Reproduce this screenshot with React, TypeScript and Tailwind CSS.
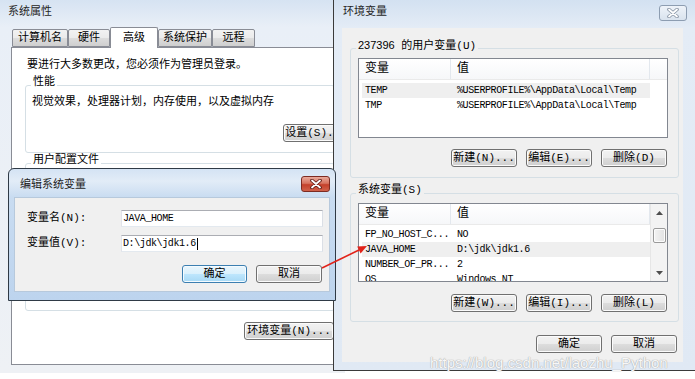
import React from "react";

type Row = [string, string];

function Btn({ children, className = "", primary = false }: { children: React.ReactNode; className?: string; primary?: boolean }) {
  return (
    <div
      className={
        "flex h-[18px] shrink-0 items-center justify-center rounded-[3px] border text-[11px] leading-none text-black " +
        (primary
          ? "border-[#3c7fb1] bg-[linear-gradient(#eaf6fd_0%,#d9f0fc_50%,#bee6fd_50%,#a7d9f5_100%)] shadow-[inset_0_0_0_1px_#f4fbff]"
          : "border-[#707070] bg-[linear-gradient(#f2f2f2_0%,#ebebeb_50%,#dddddd_50%,#cfcfcf_100%)] shadow-[inset_0_0_0_1px_#fbfbfb]") +
        " " +
        className
      }
    >
      {children}
    </div>
  );
}

function Group({ label, labelBg, className = "", children }: { label?: React.ReactNode; labelBg: string; className?: string; children?: React.ReactNode }) {
  return (
    <div className={"relative shrink-0 rounded-[3px] border border-[#d5dfe5] " + className}>
      {label && <span className={"absolute -top-[10px] left-[5px] px-[2px] text-[11px] leading-[13px] " + labelBg}>{label}</span>}
      {children}
    </div>
  );
}

function CloseX({ stroke, fill }: { stroke: string; fill: string }) {
  return (
    <svg width="12" height="10" viewBox="0 0 12 10">
      <path d="M2 1.5 L10 8.5 M10 1.5 L2 8.5" stroke={stroke} strokeWidth="3.6" strokeLinecap="round" />
      <path d="M2 1.5 L10 8.5 M10 1.5 L2 8.5" stroke={fill} strokeWidth="1.8" strokeLinecap="round" />
    </svg>
  );
}

function Scrollbar() {
  return (
    <div className="flex w-[17px] shrink-0 flex-col items-center border-l border-[#e6e6e6] bg-[#f3f3f3]">
      <div className="flex h-[17px] w-full items-center justify-center">
        <svg width="7" height="4" viewBox="0 0 7 4">
          <path d="M0 4 L3.5 0 L7 4 Z" fill="#4d4d4d" />
        </svg>
      </div>
      <div className="mt-[7px] h-[15px] w-[13px] rounded-[2px] border border-[#9a9a9a] bg-[linear-gradient(90deg,#f3f3f3,#e2e2e2)] shadow-[inset_0_0_0_1px_#fcfcfc]" />
      <div className="flex-1" />
      <div className="flex h-[17px] w-full items-center justify-center">
        <svg width="7" height="4" viewBox="0 0 7 4">
          <path d="M0 0 L7 0 L3.5 4 Z" fill="#4d4d4d" />
        </svg>
      </div>
    </div>
  );
}

function ListView({ rows, hl, pt, scroll = false, className = "" }: { rows: Row[]; hl: number; pt: string; scroll?: boolean; className?: string }) {
  return (
    <div className={"flex w-[310px] shrink-0 overflow-hidden border border-[#828790] bg-white " + className}>
      <div className="flex-1 overflow-hidden">
        <div className="flex h-[21px] items-center border-b border-[#eaeaea] bg-[linear-gradient(#ffffff,#f6f7f9)] text-[12px]">
          <div className="flex h-full w-[92px] items-center border-r border-[#e3e8ee] pl-[6px]">变量</div>
          <div className="flex h-full w-[199px] items-center border-r border-[#e3e8ee] pl-[6px]">值</div>
        </div>
        <div className={pt}>
          {rows.map(([a, b], i) => (
            <div
              key={i}
              className={
                "mx-[3px] flex h-[15px] w-[288px] items-center whitespace-nowrap font-['Liberation_Mono',monospace] text-[10px] tracking-[-0.4px] " +
                (i === hl ? "bg-[#efefef]" : "")
              }
            >
              <div className="w-[89px] pl-[3px]">{a}</div>
              <div className="pl-[6px]">{b}</div>
            </div>
          ))}
        </div>
      </div>
      {scroll && <Scrollbar />}
    </div>
  );
}

function Tab({ label, w, active = false }: { label: string; w: string; active?: boolean }) {
  return (
    <div
      className={
        "flex shrink-0 items-center justify-center rounded-t-[2px] border border-[#898c95] text-[11px] " +
        w +
        (active
          ? " relative z-10 -mb-[1px] h-[21px] border-b-0 bg-white"
          : " h-[18px] bg-[linear-gradient(#f2f2f2_0%,#ebebeb_50%,#dddddd_50%,#cfcfcf_100%)]")
      }
    >
      {label}
    </div>
  );
}

export default function App() {
  return (
    <div className="relative h-[379px] w-[695px] overflow-hidden bg-white font-['Liberation_Mono','Noto_Sans_CJK_SC',monospace] leading-[13px] text-black">
      {/* 系统属性 */}
      <div className="absolute left-0 top-0 flex h-[373px] w-[345px] flex-col bg-[linear-gradient(180deg,#d6e3f2_0px,#e9eff7_27px,#eef1f5_100%)]">
        <div className="h-[27px] shrink-0 pl-[8px] pt-[6px] text-[11px] text-[#262626]">系统属性</div>
        <div className="flex flex-col pl-[11px]">
          <div className="flex h-[20px] items-end pl-[1px]">
            <Tab label="计算机名" w="w-[56px]" />
            <Tab label="硬件" w="w-[42px]" />
            <Tab label="高级" w="w-[48px]" active />
            <Tab label="系统保护" w="w-[54px]" />
            <Tab label="远程" w="w-[43px]" />
          </div>
          <div className="flex h-[318px] w-[331px] flex-col border border-[#898c95] bg-white pt-[11px]">
            <div className="pl-[15px] text-[11px]">要进行大多数更改，您必须作为管理员登录。</div>
            <Group label="性能" labelBg="bg-white" className="ml-[13px] mt-[13px] h-[68px] w-[310px]">
              <div className="pl-[6px] pt-[10px] text-[11px]">视觉效果，处理器计划，内存使用，以及虚拟内存</div>
              <Btn className="ml-[257px] mt-[15px] w-[66px]">设置(S)...</Btn>
            </Group>
            <Group label="用户配置文件" labelBg="bg-white" className="ml-[13px] mt-[10px] h-[60px] w-[310px]" />
            <Group labelBg="bg-white" className="ml-[13px] mt-[13px] h-[75px] w-[310px]" />
            <Btn className="ml-[232px] mt-[11px] w-[90px]">环境变量(N)...</Btn>
          </div>
        </div>
      </div>

      {/* 环境变量 */}
      <div className="absolute left-[333px] top-0 flex h-[371px] w-[362px] flex-col border-b border-l border-[#3a3a3a] bg-[linear-gradient(180deg,#d3e1f1_0px,#e4ecf6_28px,#e0e9f4_100%)]">
        <div className="flex h-[28px] shrink-0 items-start justify-between">
          <span className="pl-[9px] pt-[6px] text-[11px] text-[#262626]">环境变量</span>
          <div className="mr-[8px] mt-[5px] flex h-[16px] w-[28px] items-center justify-center rounded-[3px] border border-[#8d9db1] bg-[linear-gradient(#eef3f9,#d9e3ee)]">
            <CloseX stroke="#8a96a6" fill="#ffffff" />
          </div>
        </div>
        <div className="ml-[8px] flex h-[334px] w-[341px] flex-col bg-[#f0f0f0] pl-[8px]">
          <Group
            label={
              <span>
                <span className="font-['Liberation_Sans',sans-serif]">237396</span> 的用户变量(U)
              </span>
            }
            labelBg="bg-[#f0f0f0]"
            className="mt-[20px] flex h-[130px] w-[329px] flex-col"
          >
            <ListView
              className="ml-[7px] mt-[9px] h-[80px]"
              pt="pt-[3px]"
              hl={0}
              rows={[
                ["TEMP", "%USERPROFILE%\\AppData\\Local\\Temp"],
                ["TMP", "%USERPROFILE%\\AppData\\Local\\Temp"],
              ]}
            />
            <div className="ml-[100px] mt-[11px] flex gap-[9px]">
              <Btn className="w-[66px]">新建(N)...</Btn>
              <Btn className="w-[66px]">编辑(E)...</Btn>
              <Btn className="w-[66px]">删除(D)</Btn>
            </div>
          </Group>
          <Group label="系统变量(S)" labelBg="bg-[#f0f0f0]" className="mt-[15px] flex h-[129px] w-[329px] flex-col">
            <ListView
              className="ml-[7px] mt-[9px] h-[79px]"
              pt="pt-[2px]"
              hl={1}
              scroll
              rows={[
                ["FP_NO_HOST_C...", "NO"],
                ["JAVA_HOME", "D:\\jdk\\jdk1.6"],
                ["NUMBER_OF_PR...", "2"],
                ["OS", "Windows_NT"],
              ]}
            />
            <div className="ml-[100px] mt-[12px] flex gap-[9px]">
              <Btn className="w-[66px]">新建(W)...</Btn>
              <Btn className="w-[66px]">编辑(I)...</Btn>
              <Btn className="w-[66px]">删除(L)</Btn>
            </div>
          </Group>
          <div className="ml-[186px] mt-[13px] flex gap-[9px]">
            <Btn className="w-[66px]">确定</Btn>
            <Btn className="w-[66px]">取消</Btn>
          </div>
        </div>
      </div>

      {/* 编辑系统变量 */}
      <div className="absolute left-[8px] top-[168px] flex h-[133px] w-[328px] flex-col rounded-t-[6px] border border-[#2f3a46] bg-[linear-gradient(180deg,#d4e3f4_0px,#e2ecf7_12px,#c9dcf1_28px,#bdd4ee_100%)]">
        <div className="flex h-[28px] shrink-0 items-start justify-between">
          <span className="pl-[11px] pt-[10px] text-[11px] text-[#1e1e1e]">编辑系统变量</span>
          <div className="mr-[5px] mt-[7px] flex h-[16px] w-[29px] items-center justify-center rounded-[3px] border border-[#7d2b22] bg-[linear-gradient(#e9a99b_0%,#d7735f_45%,#c4402b_55%,#d0614a_100%)]">
            <CloseX stroke="#5d1a12" fill="#ffffff" />
          </div>
        </div>
        <div className="mx-[5px] flex h-[95px] flex-col border border-[#b7c9dc] bg-[#f0f0f0]">
          <div className="mt-[12px] flex items-center">
            <span className="w-[106px] pl-[12px] text-[11px]">变量名(N):</span>
            <div className="flex h-[17px] w-[202px] items-center border border-[#abadb3] border-b-[#e3e9ef] border-l-[#e2e3ea] border-r-[#dbdfe6] bg-white pl-[1px] font-['Liberation_Mono',monospace] text-[10px] tracking-[-0.4px]">
              JAVA_HOME
            </div>
          </div>
          <div className="mt-[8px] flex items-center">
            <span className="w-[106px] pl-[12px] text-[11px]">变量值(V):</span>
            <div className="flex h-[17px] w-[202px] items-center border border-[#abadb3] border-b-[#e3e9ef] border-l-[#e2e3ea] border-r-[#dbdfe6] bg-white pl-[1px] font-['Liberation_Mono',monospace] text-[10px] tracking-[-0.4px]">
              D:\jdk\jdk1.6
              <span className="ml-[1px] h-[12px] w-[1px] bg-black" />
            </div>
          </div>
          <div className="mt-[13px] flex justify-end gap-[9px] pr-[7px]">
            <Btn primary className="w-[65px]">确定</Btn>
            <Btn className="w-[66px]">取消</Btn>
          </div>
        </div>
      </div>

      {/* red arrow */}
      <svg className="pointer-events-none absolute left-0 top-0" width="695" height="379" viewBox="0 0 695 379">
        <path d="M322 268 L359 250" stroke="#e2231a" strokeWidth="1.6" />
        <path d="M367 246 L360.6 253.5 L357.2 246.4 Z" fill="#e2231a" />
      </svg>

      <span className="pointer-events-none absolute left-[430px] top-[355px] font-['Liberation_Sans',sans-serif] text-[15px] leading-[16px] text-[#f7f7f7] [text-shadow:0_0_1px_#a8a8a8,0_0_1px_#a8a8a8]">
        https://blog.csdn.net/laozhu_Python
      </span>
    </div>
  );
}
